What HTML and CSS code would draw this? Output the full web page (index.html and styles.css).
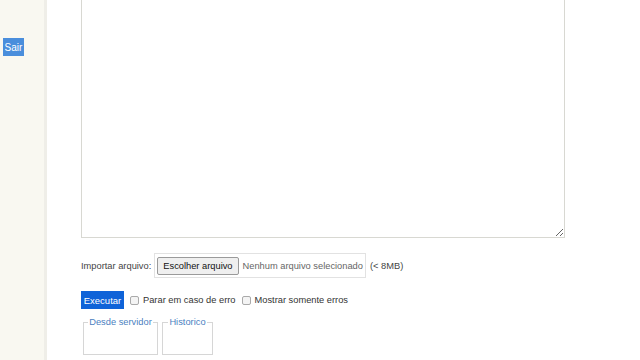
FILE: index.html
```html
<!DOCTYPE html>
<html lang="pt">
  <head>
    <meta charset="UTF-8" />
    <title>Executar script</title>
    <link rel="stylesheet" href="styles.css">
  </head>
  <body>
    <div class="layout">
      <div class="sidebar">
        <button class="logout-btn">Sair</button>
      </div>

      <div class="main">
        <textarea class="script-box"></textarea>

        <div class="import-row">
          <span class="label">Importar arquivo:</span>
          <span class="file-input">
            <span class="file-btn">Escolher arquivo</span>
            <span class="file-name">Nenhum arquivo selecionado</span>
          </span>
          <span class="limit">(&lt; 8MB)</span>
        </div>

        <div class="run-row">
          <button class="run-btn">Executar</button>
          <label class="check"><span class="box"></span>Parar em caso de erro</label>
          <label class="check"><span class="box"></span>Mostrar somente erros</label>
        </div>

        <div class="sources">
          <fieldset class="source server">
            <legend>Desde servidor</legend>
          </fieldset>
          <fieldset class="source history">
            <legend>Historico</legend>
          </fieldset>
        </div>
      </div>
    </div>
  </body>
</html>
```

FILE: styles.css
```css
body {
  margin: 0;
  font-family: "Liberation Sans", Arial, sans-serif;
  font-size: 9.3px;
  color: #333;
  background-color: white;
  overflow: hidden;
}
.layout {
  display: flex;
  height: 360px;
}
.sidebar {
  width: 44px;
  background-color: #f9f8f1;
  border-right: 3px solid #efeee8;
  padding-top: 38px;
}
.logout-btn {
  margin-left: 3px;
  width: 21px;
  height: 18px;
  padding: 0;
  border: none;
  background-color: #4a8edc;
  color: white;
  font-family: inherit;
  font-size: 10px;
}
.main {
  padding-left: 34px;
  margin-top: -20px;
}
.script-box {
  display: block;
  width: 484px;
  height: 258px;
  box-sizing: border-box;
  border: 1px solid #d8d8d2;
  margin: 0;
  resize: both;
}
.import-row {
  display: flex;
  align-items: center;
  margin-top: 15px;
  height: 25px;
  color: #444;
  white-space: nowrap;
}
.file-input {
  display: flex;
  align-items: center;
  margin-left: 3px;
  height: 25px;
  padding: 0 2px;
  border: 1px solid #e2e2e2;
  box-sizing: border-box;
}
.file-btn {
  padding: 3px 5px;
  background-color: #efefef;
  border: 1px solid #9a9a9a;
  border-radius: 2px;
  color: #111;
}
.file-name {
  margin-left: 4px;
  color: #666;
}
.limit {
  margin-left: 4px;
}
.run-row {
  display: flex;
  align-items: center;
  margin-top: 13px;
  height: 18px;
  white-space: nowrap;
}
.run-btn {
  height: 18px;
  width: 43px;
  padding: 0;
  border: none;
  background-color: #0f63d8;
  color: white;
  font-family: inherit;
  font-size: 9.5px;
}
.check {
  display: flex;
  align-items: center;
  margin-left: 6px;
  color: #333;
}
.box {
  width: 7px;
  height: 7px;
  border: 1px solid #aaa;
  border-radius: 2px;
  background-color: #f4f4f4;
  margin-right: 4px;
}
.sources {
  display: flex;
  gap: 4px;
  margin-top: 8px;
  margin-left: 2px;
}
.source {
  margin: 0;
  padding: 0 4px;
  height: 38px;
  border: 1px solid #d6d6d6;
  box-sizing: border-box;
  min-width: 0;
}
.server {
  width: 75px;
}
.history {
  width: 51px;
}
.source legend {
  margin: 0 auto;
  padding: 0 1px;
  color: #4b7fbf;
  white-space: nowrap;
}
```
